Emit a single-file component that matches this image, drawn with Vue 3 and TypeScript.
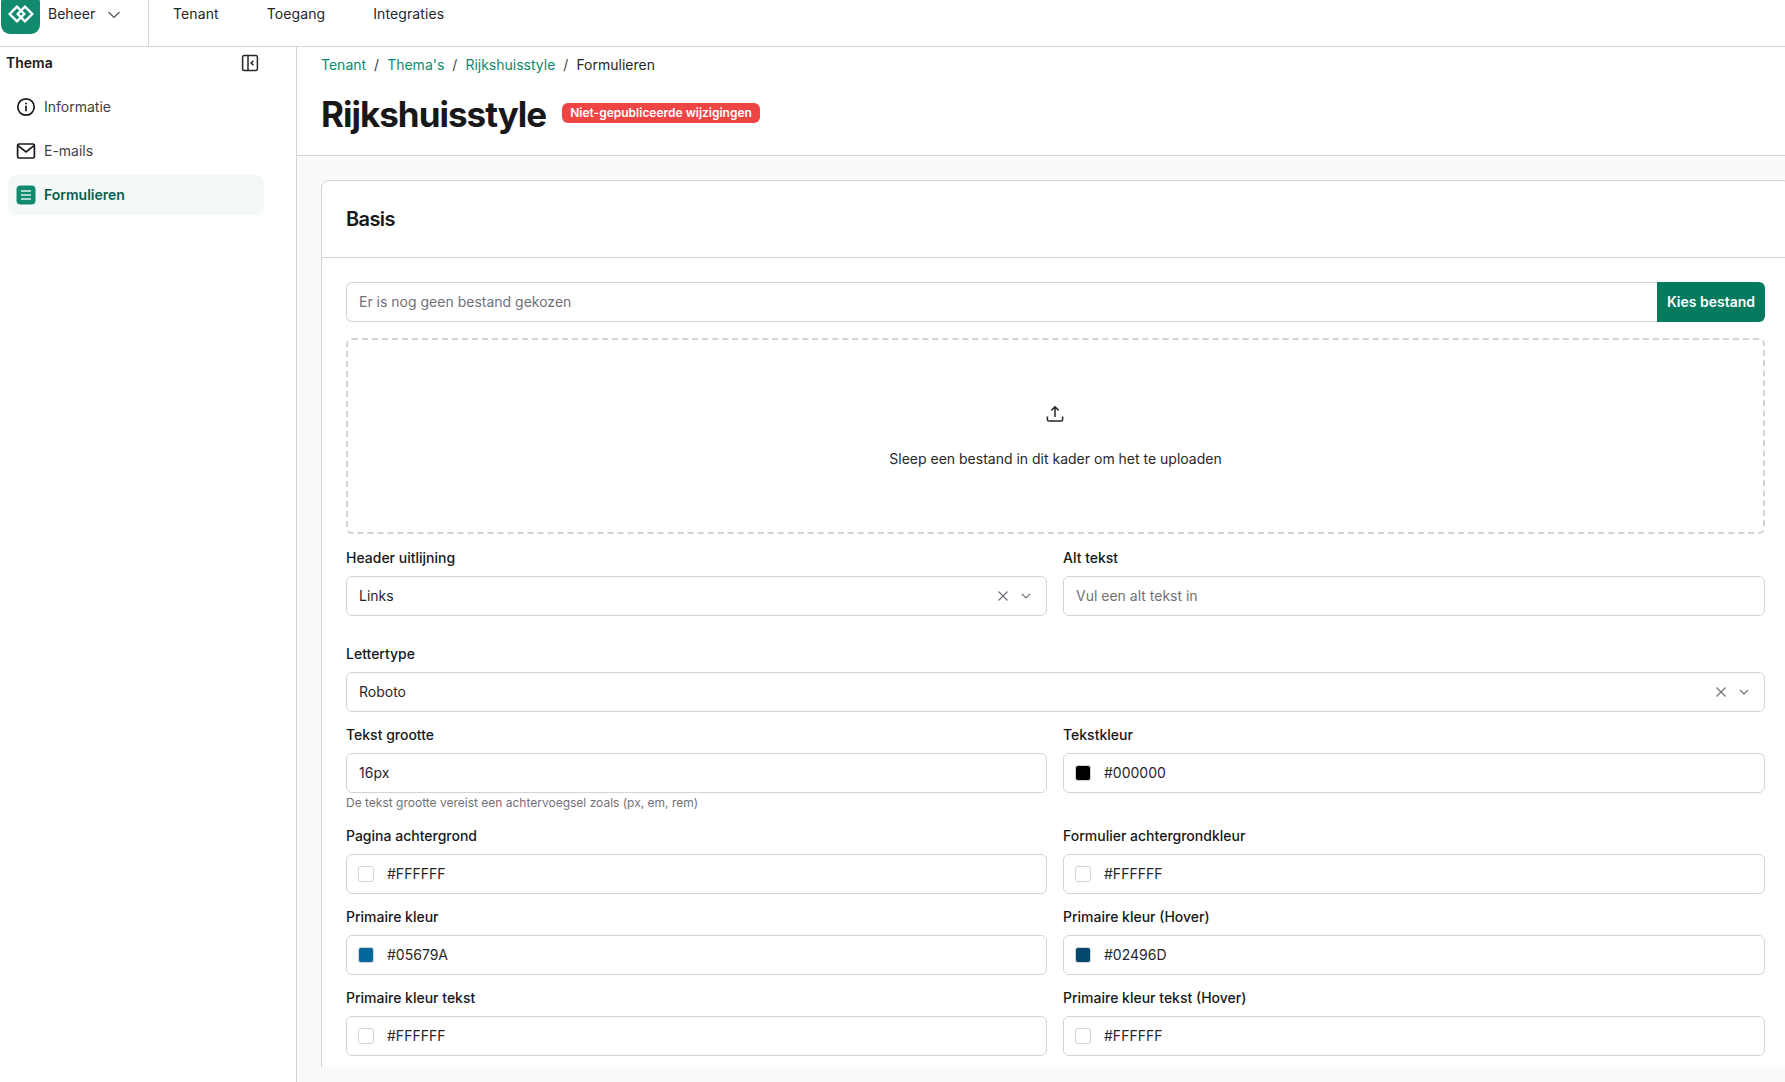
<script setup lang="ts">
interface Field {
  label: string
  value: string
  swatch: string
}

const colorRows: Field[][] = [
  [
    { label: 'Pagina achtergrond', value: '#FFFFFF', swatch: '#ffffff' },
    { label: 'Formulier achtergrondkleur', value: '#FFFFFF', swatch: '#ffffff' },
  ],
  [
    { label: 'Primaire kleur', value: '#05679A', swatch: '#05679a' },
    { label: 'Primaire kleur (Hover)', value: '#02496D', swatch: '#02496d' },
  ],
  [
    { label: 'Primaire kleur tekst', value: '#FFFFFF', swatch: '#ffffff' },
    { label: 'Primaire kleur tekst (Hover)', value: '#FFFFFF', swatch: '#ffffff' },
  ],
]
</script>

<template>
  <div class="app">
    <header class="topbar">
      <div class="brand">
        <div class="logo">
          <svg width="26" height="18" viewBox="0 0 26 18" fill="none" stroke="#fff" stroke-width="2.4">
            <path d="M9 1.7 L1.7 9 L9 16.3 L16.3 9 Z" />
            <path d="M17 1.7 L9.7 9 L17 16.3 L24.3 9 Z" />
          </svg>
        </div>
        <span class="brand-name">Beheer</span>
        <svg class="brand-chevron" width="16" height="16" viewBox="0 0 16 16" fill="none" stroke="#52525b" stroke-width="1.2">
          <path d="M2.5 5 L8 10.5 L13.5 5" />
        </svg>
      </div>
      <nav class="topnav">
        <a>Tenant</a>
        <a>Toegang</a>
        <a>Integraties</a>
      </nav>
    </header>

    <div class="body">
      <aside class="sidebar">
        <div class="side-head">
          <span>Thema</span>
          <svg width="18" height="18" viewBox="0 0 18 18" fill="none" stroke="#27272a" stroke-width="1.5">
            <rect x="1.6" y="1.6" width="14.8" height="14.8" rx="1.5" />
            <path d="M7 1.6 V16.4" />
            <path d="M12.4 6.8 L10.2 9 L12.4 11.2" stroke-width="1.6" />
          </svg>
        </div>
        <ul class="side-list">
          <li class="side-item">
            <svg width="20" height="20" viewBox="0 0 20 20" fill="none" stroke="#18181b" stroke-width="1.7" stroke-linecap="round">
              <circle cx="10" cy="10" r="8.2" />
              <path d="M10 9.4 V13.6" />
              <path d="M10 6.4 V6.5" stroke-width="2" />
            </svg>
            <span>Informatie</span>
          </li>
          <li class="side-item">
            <svg width="20" height="20" viewBox="0 0 20 20" fill="none" stroke="#18181b" stroke-width="1.7">
              <rect x="1.6" y="3" width="16.8" height="14" rx="1.6" />
              <path d="M2 4.6 L10 11 L18 4.6" />
            </svg>
            <span>E-mails</span>
          </li>
          <li class="side-item active">
            <svg width="20" height="20" viewBox="0 0 20 20">
              <rect x="0.5" y="0.5" width="19" height="19" rx="4" fill="#118a6e" />
              <path d="M5 6 H15 M5 10 H15 M5 14 H15" stroke="#dff1ec" stroke-width="1.5" />
            </svg>
            <span>Formulieren</span>
          </li>
        </ul>
      </aside>

      <main class="main">
        <div class="page-head">
          <div class="crumbs">
            <a>Tenant</a><i>/</i><a>Thema's</a><i>/</i><a>Rijkshuisstyle</a><i>/</i><span>Formulieren</span>
          </div>
          <div class="title-row">
            <h1>Rijkshuisstyle</h1>
            <span class="badge">Niet-gepubliceerde wijzigingen</span>
          </div>
        </div>

        <div class="scroller">
          <section class="card">
            <h2 class="card-title">Basis</h2>
            <div class="card-body">
              <div class="file-row">
                <div class="file-input">Er is nog geen bestand gekozen</div>
                <button class="file-btn" type="button">Kies bestand</button>
              </div>

              <div class="dropzone">
                <svg class="upload" width="18" height="18" viewBox="0 0 18 18" fill="none" stroke="#27272a" stroke-width="1.5">
                  <path d="M9 12 V2 M5.4 5.4 L9 1.8 L12.6 5.4" />
                  <path d="M1.4 11.5 V14.4 A1.6 1.6 0 0 0 3 16 H15 A1.6 1.6 0 0 0 16.6 14.4 V11.5" />
                </svg>
                <p>Sleep een bestand in dit kader om het te uploaden</p>
              </div>

              <div class="grid first">
                <div class="field">
                  <label>Header uitlijning</label>
                  <div class="control">
                    <span class="grow">Links</span>
                    <svg class="x" width="14" height="14" viewBox="0 0 14 14" fill="none" stroke="#71717a" stroke-width="1.2"><path d="M2.5 2.5 L11.5 11.5 M11.5 2.5 L2.5 11.5" /></svg>
                    <svg class="chev" width="12" height="12" viewBox="0 0 12 12" fill="none" stroke="#71717a" stroke-width="1.2"><path d="M2 4 L6 8 L10 4" /></svg>
                  </div>
                </div>
                <div class="field">
                  <label>Alt tekst</label>
                  <div class="control placeholder">Vul een alt tekst in</div>
                </div>
              </div>

              <div class="field single">
                <label>Lettertype</label>
                <div class="control">
                  <span class="grow">Roboto</span>
                  <svg class="x" width="14" height="14" viewBox="0 0 14 14" fill="none" stroke="#71717a" stroke-width="1.2"><path d="M2.5 2.5 L11.5 11.5 M11.5 2.5 L2.5 11.5" /></svg>
                  <svg class="chev" width="12" height="12" viewBox="0 0 12 12" fill="none" stroke="#71717a" stroke-width="1.2"><path d="M2 4 L6 8 L10 4" /></svg>
                </div>
              </div>

              <div class="grid hinted">
                <div class="field">
                  <label>Tekst grootte</label>
                  <div class="control">16px</div>
                  <p class="hint">De tekst grootte vereist een achtervoegsel zoals (px, em, rem)</p>
                </div>
                <div class="field">
                  <label>Tekstkleur</label>
                  <div class="control">
                    <span class="swatch" style="background: #000000"></span>
                    <span>#000000</span>
                  </div>
                </div>
              </div>

              <div v-for="(row, i) in colorRows" :key="i" class="grid">
                <div v-for="f in row" :key="f.label" class="field">
                  <label>{{ f.label }}</label>
                  <div class="control">
                    <span class="swatch" :style="{ background: f.swatch }"></span>
                    <span>{{ f.value }}</span>
                  </div>
                </div>
              </div>
            </div>
          </section>
        </div>
      </main>
    </div>
  </div>
</template>

<style>
html,
body {
  margin: 0;
  overflow: hidden;
  background: #fff;
}
</style>

<style scoped>
* {
  box-sizing: border-box;
}
.app {
  width: 1785px;
  height: 1082px;
  display: flex;
  flex-direction: column;
  font-family: Inter, "Liberation Sans", sans-serif;
  font-size: 14px;
  line-height: 20px;
  color: #18181b;
  overflow: hidden;
}
.topbar {
  height: 47px;
  flex: none;
  display: flex;
  border-bottom: 1px solid #d4d4d8;
}
.brand {
  width: 149px;
  flex: none;
  border-right: 1px solid #d4d4d8;
  display: flex;
  align-items: flex-start;
}
.logo {
  width: 39px;
  height: 40px;
  margin-top: -6px;
  margin-left: 1px;
  background: #118a6e;
  border-radius: 9px;
  display: flex;
  align-items: center;
  justify-content: center;
  flex: none;
}
.brand-name {
  margin-left: 8px;
  line-height: 28px;
  color: #27272a;
}
.brand-chevron {
  margin-left: 11px;
  margin-top: 7px;
}
.topnav {
  display: flex;
  gap: 48px;
  padding-left: 24px;
  line-height: 28px;
  color: #27272a;
  letter-spacing: 0.1px;
}
.body {
  flex: 1;
  min-height: 0;
  display: flex;
}
.sidebar {
  width: 297px;
  flex: none;
  border-right: 1px solid #d4d4d8;
}
.side-head {
  height: 32px;
  display: flex;
  align-items: center;
  justify-content: space-between;
  padding: 0 37px 0 6px;
  font-weight: 600;
}
.side-list {
  list-style: none;
  margin: 8px 0 0;
  padding: 0 32px 0 8px;
  display: flex;
  flex-direction: column;
  gap: 4px;
}
.side-item {
  height: 40px;
  display: flex;
  align-items: center;
  gap: 8px;
  padding-left: 8px;
  border-radius: 8px;
  color: #3f3f46;
}
.side-item.active {
  background: #f4f8f7;
  color: #065f4b;
  font-weight: 600;
}
.main {
  flex: 1;
  min-width: 0;
  display: flex;
  flex-direction: column;
  background: #fafafa;
}
.page-head {
  height: 109px;
  flex: none;
  background: #fff;
  border-bottom: 1px solid #d4d4d8;
  padding: 8px 24px 0;
}
.crumbs {
  display: flex;
  align-items: center;
  height: 20px;
  color: #27272a;
}
.crumbs a {
  color: #0d8a70;
}
.crumbs i {
  font-style: normal;
  margin: 0 8px;
  color: #3f3f46;
}
.title-row {
  display: flex;
  align-items: center;
  gap: 16px;
  margin-top: 16px;
  height: 44px;
}
h1 {
  margin: 2px 0 0;
  font-size: 35px;
  line-height: 44px;
  font-weight: 700;
  letter-spacing: -1px;
  color: #18181b;
}
.badge {
  background: #ef4444;
  color: #fff;
  font-size: 12px;
  font-weight: 600;
  line-height: 20px;
  padding: 0 8px;
  border-radius: 6px;
}
.scroller {
  flex: 1;
  min-height: 0;
  margin: 24px 0 15px 24px;
  overflow: hidden;
}
.card {
  margin-right: -5px;
  background: #fff;
  border: 1px solid #d4d4d8;
  border-radius: 8px;
}
.card-title {
  margin: 0;
  height: 77px;
  padding: 0 24px;
  display: flex;
  align-items: center;
  font-size: 20px;
  font-weight: 600;
  line-height: 28px;
  letter-spacing: -0.6px;
  border-bottom: 1px solid #d4d4d8;
}
.card-body {
  padding: 24px;
}
.file-row {
  display: flex;
  height: 40px;
}
.file-input {
  flex: 1;
  border: 1px solid #d4d4d8;
  border-right: 0;
  border-radius: 6px 0 0 6px;
  padding: 0 12px;
  line-height: 38px;
  color: #71717a;
}
.file-btn {
  width: 108px;
  border: 0;
  background: #047a5f;
  color: #fff;
  font: 600 14px/20px Inter, "Liberation Sans", sans-serif;
  border-radius: 0 6px 6px 0;
  padding: 0;
}
.dropzone {
  height: 196px;
  margin: 16px 0 14px;
  padding-top: 2px;
  border: 2px dashed #d4d4d8;
  border-radius: 6px;
  display: flex;
  flex-direction: column;
  align-items: center;
  justify-content: center;
  color: #27272a;
}
.dropzone p {
  margin: 26px 0 0;
}
.upload {
  margin-right: 1px;
}
.grid {
  display: grid;
  grid-template-columns: 701px 702px;
  column-gap: 16px;
  margin-bottom: 13px;
}
.grid.first {
  margin-bottom: 28px;
}
.grid.hinted {
  margin-bottom: 15px;
}
.field.single {
  margin-bottom: 13px;
}
label {
  display: block;
  font-weight: 500;
  height: 20px;
  margin-bottom: 8px;
  color: #18181b;
}
.control {
  height: 40px;
  border: 1px solid #d4d4d8;
  border-radius: 6px;
  padding: 0 12px;
  display: flex;
  align-items: center;
  color: #27272a;
}
.control.placeholder {
  color: #71717a;
}
.grow {
  flex: 1;
}
.x {
  margin-right: 10px;
}
.chev {
  margin-right: 2px;
}
.swatch {
  width: 16px;
  height: 16px;
  flex: none;
  border: 1px solid #d4d4d8;
  border-radius: 3px;
  margin-left: -1px;
  margin-right: 13px;
}
.hint {
  margin: 2px 0 0;
  font-size: 12px;
  line-height: 16px;
  color: #71717a;
}
</style>
